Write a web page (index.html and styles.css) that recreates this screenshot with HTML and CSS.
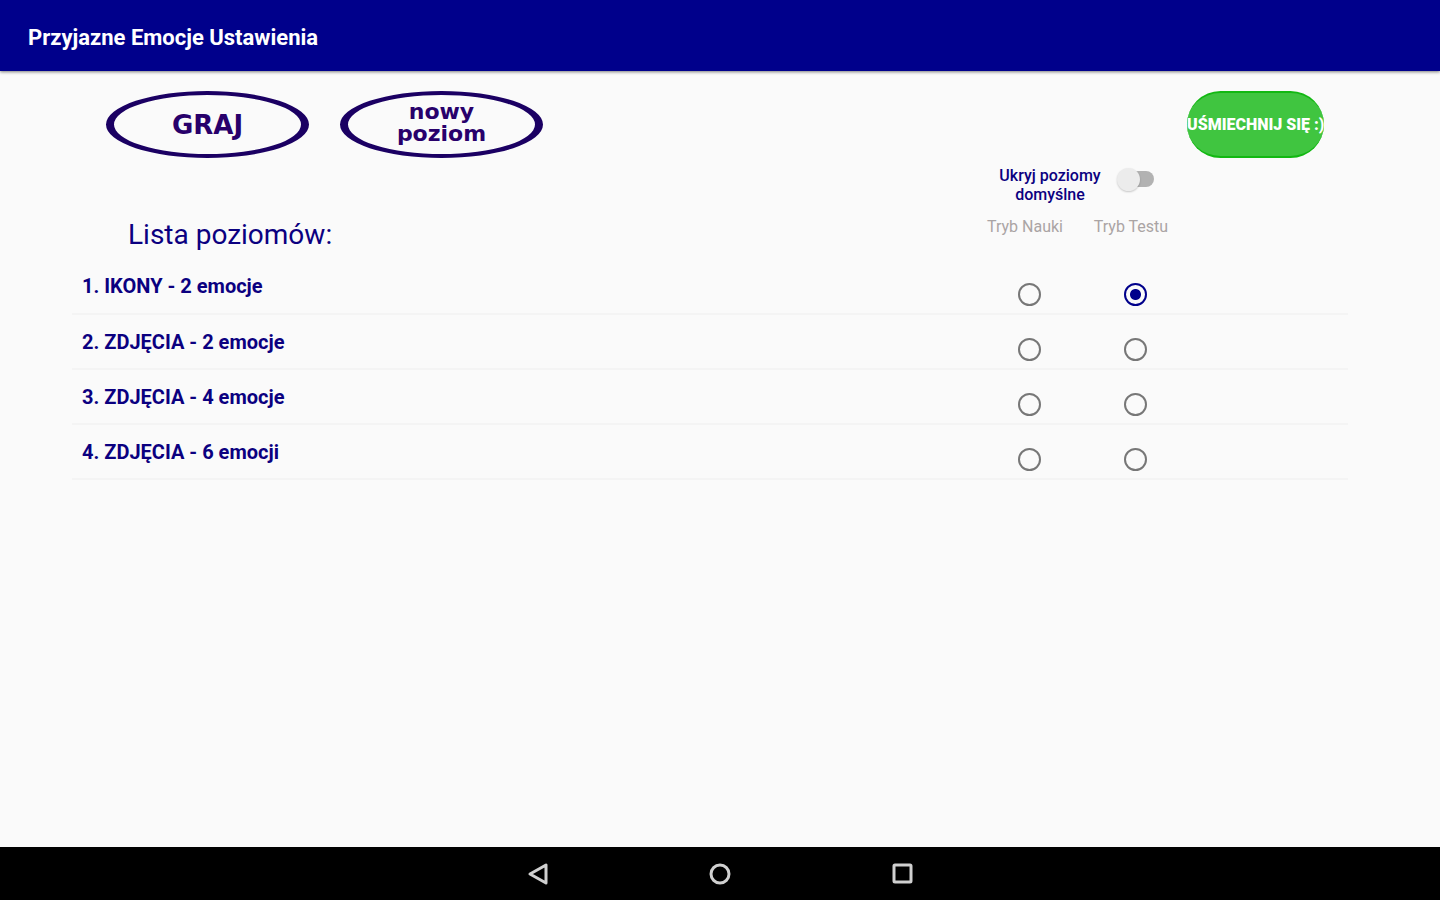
FILE: index.html
```
<!DOCTYPE html>
<html lang="pl">
<head>
  <meta charset="UTF-8">
  <meta name="viewport" content="width=device-width, initial-scale=1">
  <title>Przyjazne Emocje Ustawienia</title>
  <link rel="stylesheet" href="styles.css">
</head>
<body>
  <header class="app-bar">
    <h1 class="app-title">Przyjazne Emocje Ustawienia</h1>
  </header>

  <main class="content">
    <div class="actions">
      <button type="button" class="oval-button">GRAJ</button>
      <button type="button" class="oval-button two-lines">nowy<br>poziom</button>
      <button type="button" class="smile-button">UŚMIECHNIJ SIĘ :)</button>
    </div>

    <div class="toggle-row">
      <label class="toggle-label" for="hideDefault">Ukryj poziomy domyślne</label>
      <input type="checkbox" class="switch" id="hideDefault">
    </div>

    <table class="levels">
      <thead>
        <tr>
          <th class="list-title" scope="col">Lista poziomów:</th>
          <th class="mode" scope="col" id="learn">Tryb Nauki</th>
          <th class="mode" scope="col" id="test">Tryb Testu</th>
          <td class="spacer"></td>
        </tr>
      </thead>
      <tbody>
        <tr>
          <th class="level-name" scope="row" id="level1">1. IKONY - 2 emocje</th>
          <td><input type="radio" name="level" class="radio" aria-labelledby="level1 learn"></td>
          <td><input type="radio" name="level" class="radio" aria-labelledby="level1 test" checked></td>
          <td></td>
        </tr>
        <tr>
          <th class="level-name" scope="row" id="level2">2. ZDJĘCIA - 2 emocje</th>
          <td><input type="radio" name="level" class="radio" aria-labelledby="level2 learn"></td>
          <td><input type="radio" name="level" class="radio" aria-labelledby="level2 test"></td>
          <td></td>
        </tr>
        <tr>
          <th class="level-name" scope="row" id="level3">3. ZDJĘCIA - 4 emocje</th>
          <td><input type="radio" name="level" class="radio" aria-labelledby="level3 learn"></td>
          <td><input type="radio" name="level" class="radio" aria-labelledby="level3 test"></td>
          <td></td>
        </tr>
        <tr>
          <th class="level-name" scope="row" id="level4">4. ZDJĘCIA - 6 emocji</th>
          <td><input type="radio" name="level" class="radio" aria-labelledby="level4 learn"></td>
          <td><input type="radio" name="level" class="radio" aria-labelledby="level4 test"></td>
          <td></td>
        </tr>
      </tbody>
    </table>
  </main>

  <nav class="nav-bar">
    <button type="button" class="nav-button" aria-label="Wstecz">
      <svg viewBox="0 0 24 24"><path d="M20 3v18L4 12z"/></svg>
    </button>
    <button type="button" class="nav-button" aria-label="Ekran główny">
      <svg viewBox="0 0 24 24"><circle cx="12" cy="12" r="9"/></svg>
    </button>
    <button type="button" class="nav-button" aria-label="Ostatnie">
      <svg viewBox="0 0 24 24"><rect x="4" y="3" width="17" height="17" rx="1"/></svg>
    </button>
  </nav>
</body>
</html>
```

FILE: styles.css
```
* {
  box-sizing: border-box;
}

body {
  margin: 0;
  min-height: 100vh;
  display: flex;
  flex-direction: column;
  font-family: Roboto, sans-serif;
  background-color: #fafafa;
  color: #0b0080;
}

button {
  padding: 0;
  border: 0;
  background: none;
  cursor: pointer;
}

.app-bar {
  display: flex;
  align-items: center;
  height: 71px;
  padding: 4px 28px 0;
  background-color: #00008b;
  box-shadow: 0 1px 3px rgba(0, 0, 0, 0.5);
}

.app-title {
  margin: 0;
  font-size: 22px;
  font-weight: 700;
  color: #fff;
}

.content {
  flex: 1;
  padding: 20px 92px 20px 72px;
}

/* buttons above the list */
.actions {
  display: flex;
  gap: 31px;
  padding: 0 24px 0 34px;
}

.oval-button {
  width: 203px;
  height: 67px;
  border: solid #1b0063;
  border-width: 4px 8px;
  border-radius: 50%;
  font-family: "DejaVu Sans", sans-serif;
  font-size: 26px;
  font-weight: bold;
  color: #28006b;
}

.two-lines {
  padding-bottom: 4px;
  font-size: 22px;
  line-height: 22px;
}

.smile-button {
  width: 137px;
  height: 67px;
  margin-left: auto;
  border: solid #12b812;
  border-width: 2px 0;
  border-radius: 34px;
  background-color: #40c540;
  font-family: Roboto, sans-serif;
  font-size: 16px;
  font-weight: 900;
  white-space: nowrap;
  color: #fff;
  overflow: hidden;
}

.toggle-row {
  display: flex;
  justify-content: flex-end;
  gap: 16px;
  padding: 8px 194px 0 0;
}

.toggle-label {
  width: 102px;
  font-size: 16px;
  font-weight: 500;
  line-height: 19px;
  text-align: center;
}

.switch {
  appearance: none;
  position: relative;
  width: 37px;
  height: 24px;
  margin: 1px 0 0;
}

.switch::before,
.switch::after {
  content: "";
  position: absolute;
}

.switch::before {
  inset: 4px 0 4px 4px;
  border-radius: 8px;
  background-color: #b2b2b2;
}

.switch::after {
  top: 1px;
  left: 0;
  width: 23px;
  height: 23px;
  border-radius: 50%;
  background-color: #ececec;
  box-shadow: 0 1px 2px rgba(0, 0, 0, 0.2);
}

.switch:checked::after {
  left: 14px;
  background-color: #00008b;
}

/* list of levels */
.levels {
  width: 100%;
  border-collapse: collapse;
  table-layout: fixed;
}

.levels th,
.levels td {
  height: 55px;
  padding: 0;
  text-align: center;
}

.levels tbody tr {
  border-bottom: 2px solid #f4f4f4;
}

.levels .list-title {
  padding: 6px 0 0 56px;
  font-size: 28px;
  font-weight: 400;
  text-align: left;
}

.levels .mode {
  width: 106px;
  padding: 0 8px 10px 0;
  font-size: 16px;
  font-weight: 400;
  color: #aaa4a4;
}

.spacer {
  width: 160px;
}

.levels .level-name {
  padding-left: 10px;
  font-size: 20px;
  font-weight: 700;
  text-align: left;
}

.radio {
  appearance: none;
  display: block;
  width: 23px;
  height: 23px;
  margin: 16px auto 0;
  border: 2px solid #777;
  border-radius: 50%;
}

.radio:checked {
  border-color: #00008b;
  background: radial-gradient(circle, #00008b 5px, transparent 6px);
}

/* system navigation */
.nav-bar {
  display: flex;
  justify-content: center;
  align-items: center;
  gap: 158px;
  height: 53px;
  background-color: #000;
}

.nav-button {
  width: 24px;
  height: 24px;
}

.nav-button svg {
  display: block;
  fill: none;
  stroke: #d0d0d0;
  stroke-width: 3;
  stroke-linejoin: round;
}
```
